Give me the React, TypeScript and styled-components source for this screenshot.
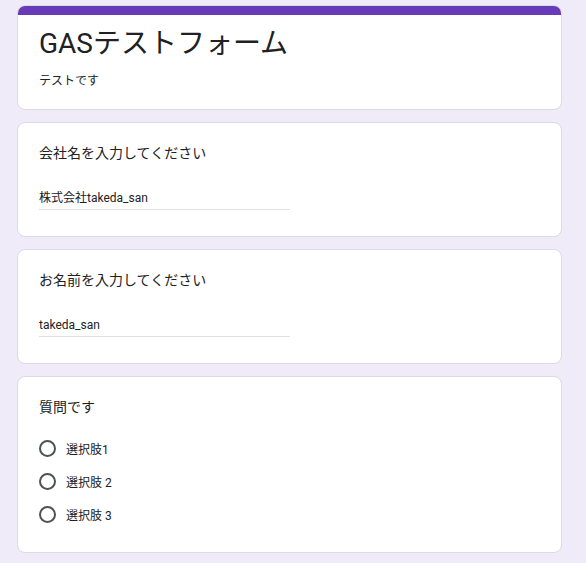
import React from "react";
import styled, { createGlobalStyle } from "styled-components";

const GlobalStyle = createGlobalStyle`
  html, body {
    margin: 0;
    padding: 0;
    background: #f0ebf8;
  }
  body {
    font-family: Roboto, "Noto Sans CJK JP", sans-serif;
    color: #202124;
  }
`;

const Page = styled.div`
  display: flex;
  flex-direction: column;
  gap: 12px;
  width: 545px;
  padding: 5px 0 10px 17px;
  box-sizing: content-box;
`;

const Card = styled.section<{ $height: number }>`
  background: #ffffff;
  border: 1px solid #dadce0;
  border-radius: 8px;
  box-sizing: border-box;
  overflow: hidden;
  height: ${(p) => p.$height}px;
`;

const TopBar = styled.div`
  height: 10px;
  background: #673ab7;
  margin: -1px -1px 0 -1px;
`;

const HeaderBody = styled.div`
  padding: 9px 21px 0 21px;
`;

const FormTitle = styled.h1`
  margin: 0;
  font-size: 28px;
  line-height: 40px;
  font-weight: 400;
  color: #202124;
`;

const FormDesc = styled.p`
  margin: 8px 0 0 0;
  font-size: 12px;
  line-height: 18px;
  color: #202124;
`;

const QuestionBody = styled.div`
  padding: 20px 21px 0 21px;
`;

const QuestionTitle = styled.h2`
  margin: 0;
  font-size: 14px;
  line-height: 20px;
  font-weight: 400;
  color: #202124;
`;

const Answer = styled.div`
  margin-top: 26px;
  width: 251px;
  font-size: 12px;
  line-height: 18px;
  padding-bottom: 2px;
  border-bottom: 1px solid #e0e0e0;
  color: #202124;
`;

const Options = styled.div`
  display: flex;
  flex-direction: column;
  gap: 9px;
  margin-top: 19px;
`;

const OptionRow = styled.label`
  display: flex;
  align-items: center;
  gap: 10px;
  height: 24px;
  font-size: 12px;
  color: #202124;
`;

const RadioCircle = styled.span`
  display: inline-block;
  width: 17px;
  height: 17px;
  border: 2px solid #4f5256;
  border-radius: 50%;
  box-sizing: border-box;
  flex: none;
`;

const TextQuestion: React.FC<{ title: string; value: string }> = ({ title, value }) => (
  <Card $height={115}>
    <QuestionBody>
      <QuestionTitle>{title}</QuestionTitle>
      <Answer>{value}</Answer>
    </QuestionBody>
  </Card>
);

export default function App() {
  const options = ["選択肢1", "選択肢 2", "選択肢 3"];
  return (
    <>
      <GlobalStyle />
      <Page>
        <Card $height={105}>
          <TopBar />
          <HeaderBody>
            <FormTitle>GASテストフォーム</FormTitle>
            <FormDesc>テストです</FormDesc>
          </HeaderBody>
        </Card>
        <TextQuestion title="会社名を入力してください" value="株式会社takeda_san" />
        <TextQuestion title="お名前を入力してください" value="takeda_san" />
        <Card $height={177}>
          <QuestionBody>
            <QuestionTitle>質問です</QuestionTitle>
            <Options>
              {options.map((o) => (
                <OptionRow key={o}>
                  <RadioCircle />
                  {o}
                </OptionRow>
              ))}
            </Options>
          </QuestionBody>
        </Card>
      </Page>
    </>
  );
}
